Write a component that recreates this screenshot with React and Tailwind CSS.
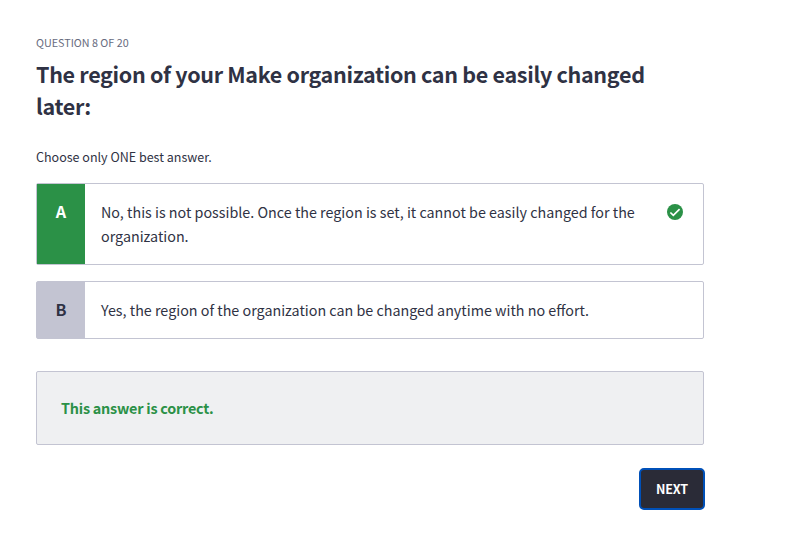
const OPTIONS = [
  {
    letter: "A",
    text: "No, this is not possible. Once the region is set, it cannot be easily changed for the organization.",
    correct: true,
  },
  {
    letter: "B",
    text: "Yes, the region of the organization can be changed anytime with no effort.",
    correct: false,
  },
];

function CorrectIcon() {
  return (
    <svg viewBox="0 0 16 16" className="mt-1 size-4 shrink-0" fill="none" aria-label="Correct">
      <circle cx="8" cy="8" r="8" fill="#2b9147" />
      <path d="M3.4 8.5 6.3 11.3 12.6 5.1" stroke="#fff" strokeWidth="1.7" />
    </svg>
  );
}

function Option({ letter, text, correct }) {
  return (
    <li className="flex rounded-[2px] border border-[#c3c4d2] bg-white">
      <div
        className={`w-12 shrink-0 pt-[15px] text-center text-[16.2px] leading-6 font-bold ${
          correct ? "bg-[#2b9147] text-white" : "bg-[#c3c4d2] text-[#2f3244]"
        }`}
      >
        {letter}
      </div>
      <div className="flex grow justify-between py-4 pr-5 pl-4">
        <p className="w-[546px] text-[14.32px] leading-6">{text}</p>
        {correct && <CorrectIcon />}
      </div>
    </li>
  );
}

export default function App() {
  return (
    <main className="min-h-screen bg-white pt-9 pl-9 font-['Noto_Sans_CJK_SC',sans-serif] text-[#2f3244]">
      <div className="w-[668px]">
        <p className="text-[10.75px] leading-[14px] text-[#676b7e] uppercase">Question 8 of 20</p>
        <h1 className="mt-2 text-[21.5px] leading-8 font-bold tracking-[-0.31px]">
          The region of your Make organization can be easily changed later:
        </h1>
        <p className="mt-[25px] text-[12.53px] leading-5">Choose only ONE best answer.</p>
        <ul className="mt-4 flex flex-col gap-4">
          {OPTIONS.map((option) => (
            <Option key={option.letter} {...option} />
          ))}
        </ul>
        <div className="mt-8 rounded-[2px] border border-[#c3c4d2] bg-[#eff0f2] p-6 text-[14.4px] leading-6 font-bold tracking-[-0.23px] text-[#2b9147]">
          This answer is correct.
        </div>
        <div className="-mr-px mt-[23px] flex justify-end">
          <button className="h-[42px] w-[66px] rounded-[5px] border-2 border-[#0050b8] bg-[#2a2b37] text-[12.6px] font-bold tracking-[-0.2px] text-white">
            NEXT
          </button>
        </div>
      </div>
    </main>
  );
}
